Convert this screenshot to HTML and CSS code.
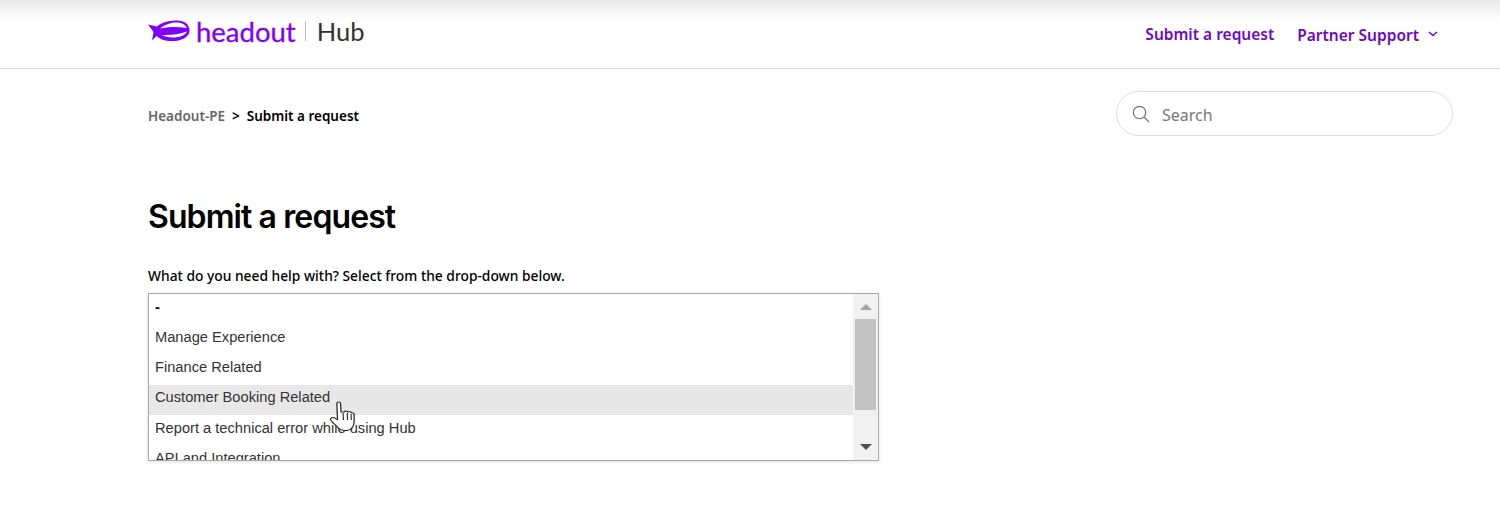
FILE: index.html
```html
<!DOCTYPE html>
<html lang="en">
<head>
    <meta charset="UTF-8">
    <title>Submit a request</title>
    <link rel="stylesheet" href="styles.css">
</head>
<body>
    <header class="site-header">
        <a class="logo">
            <svg class="logo-mark" viewBox="0 0 42 22" width="42" height="22">
                <path d="M0 4.5 L9 6.5 C13 2.5 21 0.5 29 0.5 C36.5 0.5 41.5 4.5 41.5 10.5 C41.5 16.5 35 20.5 26 21 C18 21.5 12 19.5 8.5 16 L4 20.5 L5.5 12 Z" fill="#8000ff"/>
                <path d="M12 8.5 C17 4.3 24 2.5 29 2.6 C33.5 2.7 37.3 4.6 38.8 8 C30 6.4 20 6.5 12 8.5 Z" fill="#fff"/>
                <path d="M14 15 C22 15.4 32 14.4 39 11.5 C37.5 14.8 33 16.8 27 17.4 C22 17.8 17 17 14 15 Z" fill="#fff"/>
            </svg>
            <span class="logo-word">headout</span>
            <span class="logo-sep"></span>
            <span class="logo-hub">Hub</span>
        </a>
        <nav class="top-nav">
            <a class="nav-link">Submit a request</a>
            <a class="nav-link nav-drop">Partner Support
                <svg viewBox="0 0 10 6" width="10" height="6"><path d="M1 1 L5 4.5 L9 1" fill="none" stroke="#6f06c9" stroke-width="1.5"/></svg>
            </a>
        </nav>
    </header>

    <div class="sub-nav">
        <ol class="breadcrumbs">
            <li class="crumb-link">Headout-PE</li>
            <li class="crumb-sep">&gt;</li>
            <li class="crumb-current">Submit a request</li>
        </ol>
        <div class="search">
            <svg viewBox="0 0 18 18" width="18" height="18"><circle cx="7.5" cy="7.5" r="6.2" fill="none" stroke="#777" stroke-width="1.3"/><path d="M12 12 L17 17" stroke="#777" stroke-width="1.3"/></svg>
            <span class="search-text">Search</span>
        </div>
    </div>

    <main class="content">
        <h1>Submit a request</h1>
        <p class="field-label">What do you need help with? Select from the drop-down below.</p>
        <div class="dropdown">
            <ul class="options">
                <li class="option option-first">-</li>
                <li class="option">Manage Experience</li>
                <li class="option">Finance Related</li>
                <li class="option option-hover">Customer Booking Related</li>
                <li class="option">Report a technical error while using Hub</li>
                <li class="option">API and Integration</li>
            </ul>
            <div class="scrollbar">
                <span class="arrow arrow-up"></span>
                <span class="thumb"></span>
                <span class="arrow arrow-down"></span>
            </div>
            <svg class="hand-cursor" viewBox="0 0 20 31" width="25" height="31" preserveAspectRatio="none">
                <path d="M5.5 2.5 C5.5 0.5 8.5 0.5 8.5 2.5 L8.8 11 L11.5 11 C12 9.5 14 9.8 14.2 11.2 C15 10.2 17 10.6 17.2 12 C18.3 11.5 19.3 12.3 19.3 13.5 L19.3 20 C19.3 25 17.5 29 13.5 29.5 C9.5 30 7.5 28.5 5.5 25.5 L0.8 19.5 C-0.3 17.5 2 15.5 3.8 17 L6 19 Z" fill="#fff" stroke="#222" stroke-width="1" stroke-linejoin="round"/>
                <path d="M10.5 12 L10.7 19 M13.8 12 L14 19 M16.8 13 L17 19" fill="none" stroke="#222" stroke-width="0.9"/>
            </svg>
        </div>
    </main>
</body>
</html>
```

FILE: styles.css
```css
* {
    margin: 0;
    padding: 0;
    box-sizing: border-box;
}

body {
    font-family: "Noto Sans", Arial, sans-serif;
    background-color: #fff;
    color: #000;
    height: 519px;
    overflow: hidden;
}

.site-header {
    height: 69px;
    padding: 0 62px 0 148px;
    display: flex;
    justify-content: space-between;
    align-items: center;
    border-bottom: 1px solid #ddd;
    background: linear-gradient(#e9e9e9 0, #fff 20px);
}

.logo {
    display: flex;
    align-items: center;
    margin-top: -6px;
}

.logo-mark {
    margin-right: 6px;
}

.logo-word {
    font-family: Lato, sans-serif;
    font-size: 27.5px;
    color: #8000ff;
    -webkit-text-stroke: 0.3px #8000ff;
}

.logo-sep {
    width: 1px;
    height: 20px;
    background-color: #bbb;
    margin: 0 11px 0 9px;
}

.logo-hub {
    font-family: Lato, sans-serif;
    font-weight: 400;
    font-size: 25.5px;
    color: #333;
}

.top-nav {
    display: flex;
    align-items: center;
    gap: 23px;
}

.nav-link {
    font-size: 15.5px;
    font-weight: 600;
    color: #6f06c9;
}

.nav-drop {
    display: flex;
    align-items: center;
    gap: 9px;
    margin-top: 2px;
}

.nav-drop svg {
    margin-top: -3px;
}

.sub-nav {
    padding: 22px 47px 0 148px;
    display: flex;
    justify-content: space-between;
    align-items: center;
}

.breadcrumbs {
    list-style: none;
    display: flex;
    gap: 7px;
    font-size: 13.5px;
    font-weight: 600;
    margin-top: 4px;
}

.crumb-link {
    color: #666;
}

.search {
    width: 337px;
    height: 45px;
    border: 1px solid #ddd;
    border-radius: 23px;
    padding-left: 15px;
    display: flex;
    align-items: center;
    gap: 12px;
}

.search-text {
    font-size: 16px;
    color: #777;
    margin-top: 2px;
}

.content {
    padding: 0 148px;
}

h1 {
    font-family: Inter, "Liberation Sans", sans-serif;
    font-size: 32px;
    font-weight: 600;
    letter-spacing: -0.9px;
    line-height: 40px;
    margin-top: 61px;
}

.field-label {
    font-size: 13.8px;
    font-weight: 500;
    line-height: 20px;
    margin-top: 29px;
}

.dropdown {
    position: relative;
    width: 731px;
    height: 168px;
    margin-top: 7px;
    border: 1px solid #a8a8a8;
    display: flex;
    box-shadow: 0 1px 4px rgba(0, 0, 0, 0.12);
    overflow: hidden;
}

.options {
    list-style: none;
    flex: 1;
    font-family: "Liberation Sans", Arial, sans-serif;
    font-size: 14.67px;
    color: #333;
}

.option {
    height: 30.2px;
    line-height: 26px;
    padding-left: 6px;
    white-space: nowrap;
}

.option-first {
    color: #000;
    font-weight: 700;
}

.option-hover {
    background-color: #e8e8e8;
    line-height: 25px;
}

.scrollbar {
    width: 25px;
    background-color: #f1f1f1;
    display: flex;
    flex-direction: column;
    align-items: center;
}

.arrow {
    width: 0;
    height: 0;
    border-left: 6px solid transparent;
    border-right: 6px solid transparent;
}

.arrow-up {
    border-bottom: 6px solid #a3a3a3;
    margin-top: 10px;
}

.thumb {
    width: 21px;
    height: 91px;
    background-color: #c1c1c1;
    margin-top: 9px;
}

.arrow-down {
    border-top: 6px solid #505050;
    margin-top: 34px;
}

.hand-cursor {
    position: absolute;
    left: 181px;
    top: 107px;
}
```
